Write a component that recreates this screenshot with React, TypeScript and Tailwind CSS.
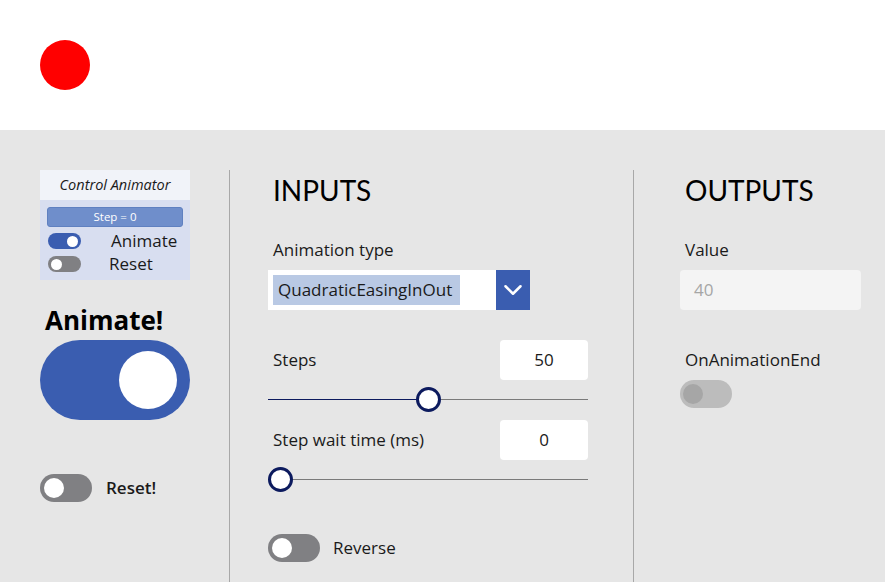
import { ChevronDown } from 'lucide-react'

function Toggle({ on, size }: { on: boolean; size: 'xs' | 'sm' | 'lg' }) {
  if (size === 'lg') {
    return (
      <div className="flex h-[80px] w-[150px] items-center justify-end rounded-full bg-[#3a5db0] pr-[13px]">
        <div className="h-[58px] w-[58px] rounded-full bg-white" />
      </div>
    )
  }
  if (size === 'xs') {
    return (
      <div
        className={`flex h-[16px] w-[33px] items-center rounded-full px-[3px] ${
          on ? 'justify-end bg-[#3a5db0]' : 'justify-start bg-[#808083]'
        }`}
      >
        <div className="h-[11px] w-[11px] rounded-full bg-white" />
      </div>
    )
  }
  return (
    <div
      className={`flex h-[28px] w-[52px] items-center rounded-full px-[4px] ${
        on ? 'justify-end bg-[#3a5db0]' : 'justify-start bg-[#808083]'
      }`}
    >
      <div className="h-[20px] w-[20px] rounded-full bg-white" />
    </div>
  )
}

function Slider({ pos }: { pos: number }) {
  return (
    <div className="relative h-[26px] w-[320px]">
      <div className="absolute top-[12px] left-0 h-px w-full bg-[#7a7a7a]" />
      <div
        className="absolute top-[12px] left-0 h-px bg-[#0c1a5e]"
        style={{ width: pos }}
      />
      <div
        className="absolute top-0 h-[25px] w-[25px] rounded-full border-[3px] border-[#0c1a5e] bg-white"
        style={{ left: pos - 12 }}
      />
    </div>
  )
}

export default function App() {
  return (
    <div className="h-[582px] w-[885px] overflow-hidden font-['Open_Sans',sans-serif] text-[#1a1a1a]">
      <div className="h-[130px] bg-white pt-[40px] pl-[40px]">
        <div className="h-[50px] w-[50px] rounded-full bg-[#ff0000]" />
      </div>

      <div className="flex h-[452px] bg-[#e6e6e6] pt-[40px]">
        {/* left */}
        <div className="w-[229px] pl-[40px]">
          <div className="w-[150px]">
            <div className="flex h-[30px] items-center justify-center bg-[#f1f3f9] text-[14.5px] italic">
              Control Animator
            </div>
            <div className="h-[80px] bg-[#d8def0] px-[7px] pt-[7px]">
              <div className="flex h-[20px] items-center justify-center rounded-[3px] border border-[#5f80c0] bg-[#6f8ecb] text-[11.5px] text-white">
                Step = 0
              </div>
              <div className="mt-[5px] flex items-center">
                <div className="pl-px">
                  <Toggle on size="xs" />
                </div>
                <span className="ml-[30px] text-[17px] leading-[18px]">Animate</span>
              </div>
              <div className="mt-[5px] flex items-center">
                <div className="pl-px">
                  <Toggle on={false} size="xs" />
                </div>
                <span className="ml-[28px] text-[17px] leading-[18px]">Reset</span>
              </div>
            </div>
          </div>

          <div className="mt-[22px] pl-[5px] text-[26px] leading-[36px] font-bold text-black">
            Animate!
          </div>
          <div className="mt-[2px]">
            <Toggle on size="lg" />
          </div>

          <div className="mt-[54px] flex items-center">
            <Toggle on={false} size="sm" />
            <span className="ml-[14px] text-[17px] font-semibold">Reset!</span>
          </div>
        </div>

        <div className="w-px bg-[#a8a8a8]" />

        {/* inputs */}
        <div className="w-[403px] pl-[38px]">
          <div className="pl-[5px] font-['Lato',sans-serif] text-[28px] leading-[40px] text-black">
            INPUTS
          </div>
          <div className="mt-[29px] pl-[5px] text-[17px] leading-[22px]">Animation type</div>
          <div className="mt-[9px] flex h-[40px] w-[262px] items-center bg-white pl-[5px]">
            <span className="flex h-[30px] w-[187px] items-center bg-[#b9c9e4] pl-[5px] text-[17px]">
              QuadraticEasingInOut
            </span>
            <div className="ml-auto flex h-[40px] w-[34px] items-center justify-center bg-[#3a5db0]">
              <ChevronDown className="h-[30px] w-[30px] text-white" strokeWidth={2} />
            </div>
          </div>

          <div className="mt-[30px] flex w-[320px] items-center justify-between">
            <span className="pl-[5px] text-[17px]">Steps</span>
            <div className="flex h-[40px] w-[88px] items-center justify-center rounded-[4px] bg-white text-[17px]">
              50
            </div>
          </div>
          <div className="mt-[7px]">
            <Slider pos={160} />
          </div>

          <div className="mt-[7px] flex w-[320px] items-center justify-between">
            <span className="pl-[5px] text-[17px]">Step wait time (ms)</span>
            <div className="flex h-[40px] w-[88px] items-center justify-center rounded-[4px] bg-white text-[17px]">
              0
            </div>
          </div>
          <div className="mt-[7px]">
            <Slider pos={12} />
          </div>

          <div className="mt-[41px] flex items-center">
            <Toggle on={false} size="sm" />
            <span className="ml-[13px] text-[17px]">Reverse</span>
          </div>
        </div>

        <div className="w-px bg-[#a8a8a8]" />

        {/* outputs */}
        <div className="flex-1 pl-[46px]">
          <div className="pl-[5px] font-['Lato',sans-serif] text-[28px] leading-[40px] text-black">
            OUTPUTS
          </div>
          <div className="mt-[29px] pl-[5px] text-[17px] leading-[22px]">Value</div>
          <div className="mt-[9px] flex h-[40px] w-[181px] items-center rounded-[4px] bg-[#f4f4f4] pl-[14px] text-[17px] text-[#a6a6a6]">
            40
          </div>
          <div className="mt-[39px] pl-[5px] text-[17px] leading-[22px]">OnAnimationEnd</div>
          <div className="mt-[9px] flex h-[28px] w-[52px] items-center rounded-full bg-[#bcbcbc] px-[3px]">
            <div className="h-[20px] w-[20px] rounded-full bg-[#a6a6a6]" />
          </div>
        </div>
      </div>
    </div>
  )
}
